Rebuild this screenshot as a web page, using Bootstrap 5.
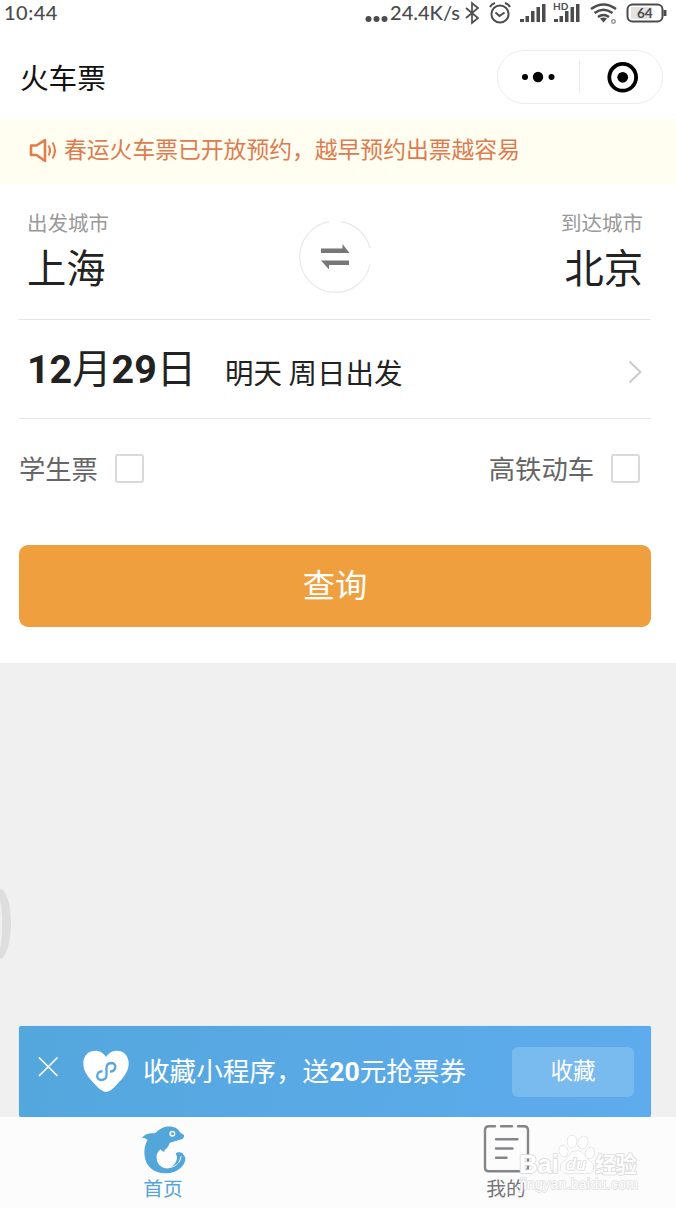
<!DOCTYPE html>
<html lang="zh-CN">
<head>
<meta charset="utf-8">
<meta name="viewport" content="width=device-width, initial-scale=1">
<title>火车票</title>
<link href="https://cdn.jsdelivr.net/npm/bootstrap@5.3.0/dist/css/bootstrap.min.css" rel="stylesheet">
<style>
body{font-family:"Noto Sans CJK SC",sans-serif;background:#f0f0f0;color:#222;line-height:1;overflow:hidden}
svg{display:block;flex:none}
.screen{width:676px;height:1208px}
.num{font-family:Roboto,sans-serif;font-weight:700;line-height:1}
.statusbar{height:27px;font-family:Lato,sans-serif;font-size:20px;font-weight:500;color:#4c4c4c;padding-left:4px}
.statusbar span{padding-bottom:3px}
.statusbar .clock{letter-spacing:.5px}
.statusbar .rate{margin-right:1px}
.header{height:92px;padding:9px 13px 0 20px;font-size:28.6px;color:#111}
.capsule{width:166px;height:54px;border:1px solid #ededed;margin-top:-1px}
.notice{height:65px;background:#fffef1;color:#dc7c50;font-size:22.8px;padding:0 0 4px 29px}
.panel{height:479px;padding:0 25px 0 19px}
.cities{height:136px;padding:28px 8px 0 8px;border-bottom:1px solid #e6e6e6}
.city-label{font-size:20.5px;line-height:20px;color:#999}
.city-name{font-size:39.3px;line-height:40px;margin-top:14px}
.swap{margin-top:8px}
.date-row{height:99px;border-bottom:1px solid #e6e6e6;padding:0 8px 0 8px}
.date{font-size:39.4px;line-height:40px;margin-top:-2px;width:198px}
.weekday{font-size:28.5px;line-height:30px;margin-top:5px}
.arrow{margin-top:5px}
.options{height:98px;font-size:26.3px;color:#666;padding-right:11px}
.options .form-check-input{width:29px;height:29px;margin:0 0 0 17px;border:2px solid #d9d9d9;border-radius:3px}
.options label{margin-top:1px}
.search{height:82px;margin-top:28px;background:#f09f3e!important;color:#fff!important;border:0;border-radius:9px;font-size:32.3px;line-height:32px;padding:0 0 7px}
.promo{height:91px;margin:0 25px 0 19px;padding:0 17px 0 19px;color:#fff;background:linear-gradient(100deg,#54a7dd,#5eabed);border-radius:2px;box-shadow:0 0 1px #78c5dc}
.promo-art{margin-top:-2px}
.promo-text{font-size:26.6px;padding-bottom:2px;line-height:30px}
.collect{width:122px;height:50px;font-size:22.6px;line-height:24px;border:0;border-radius:6px;background:#79bbee!important;color:#fff!important;padding:0 0 3px}
.tabs{height:91px;background:#fcfcfc;font-size:19.8px;line-height:20px}
.tabs span{margin-top:3px}
.tab-icon{margin-top:7px}
.tab-home{flex:0 0 326px;color:#55a5db}
.tab-mine{flex:0 0 360px;color:#77777b}
.watermark{left:515px;top:1130px}
.edge{left:0;top:888px}
</style>
</head>
<body>
<div class="screen d-flex flex-column position-relative bg-transparent">
  <div class="statusbar bg-white d-flex align-items-center">
    <span class="clock">10:44</span>
    <svg class="ms-auto" width="25" height="27" viewBox="0 0 25 27" fill="#4c4c4c"><circle cx="3.500" cy="19" r="3"/><circle cx="11.500" cy="19" r="3"/><circle cx="19.500" cy="19" r="3"/></svg>
    <span class="rate">24.4K/s</span>
    <svg width="215" height="27" viewBox="461 0 215 27" fill="none" stroke="#4c4c4c" stroke-width="2">
      <path d="M466 8l12 10-6 5V3l6 5-12 10" stroke-width="1.7"/>
      <circle cx="500" cy="14" r="8.6"/><path d="M495.5 12.5l4 3.500 5-3.500M490 7q1.500-3 5-4M510 7q-1.500-3-5-4"/>
      <g fill="#4c4c4c" stroke="none"><path d="M520 22v-3h4v3zM525.500 22v-6h3.500v6zM531 22V11h3.500v11zM536.500 22V7h3.500v15zM542 22V4h3.500v18z"/><path d="M554 22v-3h4v3zM559.500 22v-6h3.500v6zM565 22V11h3.500v11zM570.500 22V7h3.500v15zM576 22V4h3.500v18z"/></g>
      <text x="553" y="9.500" font-size="10" font-weight="700" font-family="Lato,sans-serif" fill="#4c4c4c" stroke="none">HD</text>
      <path d="M591 9q12.500-9 25 0M594.500 13q9-6.500 18 0M598 17q5.500-4 11 0" stroke-width="2.600"/><path d="M600 18.500q3.500-2 7 0l-3.500 4z" fill="#4c4c4c" stroke="none"/><circle cx="613.500" cy="21.500" r="1.800" stroke="#888" stroke-width="1.300"/>
      <rect x="627.500" y="4.500" width="35" height="17" rx="5"/><path d="M631 7h21v12h-21z" fill="#e3e3e3" stroke="none"/><path d="M665 10v6" stroke-width="3"/>
      <text x="637" y="18" font-size="13.500" font-weight="700" font-family="Lato,sans-serif" fill="#4c4c4c" stroke="none">64</text>
    </svg>
  </div>
  <header class="header bg-white d-flex align-items-center justify-content-between">
    <span>火车票</span>
    <div class="capsule rounded-pill d-flex align-items-center">
      <svg width="164" height="52" viewBox="498 51 164 52"><g><circle cx="525" cy="77" r="3"/><circle cx="538" cy="77" r="5.200"/><circle cx="551.500" cy="77" r="3"/></g><path d="M579.500 61v32" stroke="#eaeaea"/><circle cx="622.700" cy="77.300" r="13.400" fill="none" stroke="#000" stroke-width="3.800"/><circle cx="622.700" cy="77.300" r="5.400"/></svg>
    </div>
  </header>
  <div class="notice d-flex align-items-center">
    <svg width="35" height="26" viewBox="29 136 35 26" fill="none" stroke="#e17c4c" stroke-width="2.600" stroke-linejoin="round"><path d="M31 144.500h5.500l8.500-5.500v21l-8.500-6H31z"/><path d="M48.500 144.500q3 5 0 10M52.500 141.500q5 8 0 16" stroke-width="2"/></svg>
    <span>春运火车票已开放预约，越早预约出票越容易</span>
  </div>
  <main class="panel bg-white">
    <div class="cities d-flex justify-content-between align-items-start">
      <div><div class="city-label">出发城市</div><div class="city-name">上海</div></div>
      <svg class="swap" width="74" height="74" viewBox="299 220 74 74"><path d="M330 221.700A35.600 35.600 0 1 0 371.200 264M342 221.700A35.600 35.600 0 0 1 371 248" fill="none" stroke="#e8e8e8" stroke-width="1.200"/><path d="M322 248.500h21.500v-4.500l7 9H322zM350 265h-20v4.500l-8-9h28z" fill="#777"/></svg>
      <div class="text-end"><div class="city-label">到达城市</div><div class="city-name">北京</div></div>
    </div>
    <div class="date-row d-flex align-items-center">
      <div class="date"><span class="num">12</span>月<span class="num">29</span>日</div>
      <div class="weekday">明天 周日出发</div>
      <svg class="arrow ms-auto" width="16" height="24" viewBox="627 360 16 24" fill="none" stroke="#c8c8c8" stroke-width="1.800"><path d="M629.500 361.500l11 10.500-11 10.500"/></svg>
    </div>
    <div class="options d-flex align-items-center justify-content-between">
      <div class="d-flex align-items-center"><label for="student">学生票</label><input class="form-check-input" type="checkbox" id="student"></div>
      <div class="d-flex align-items-center"><label for="rapid">高铁动车</label><input class="form-check-input" type="checkbox" id="rapid"></div>
    </div>
    <button class="search btn w-100">查询</button>
  </main>
  <div class="promo d-flex align-items-center mt-auto">
    <svg class="promo-art" width="105" height="50" viewBox="38 1046 105 50" fill="none" stroke="#fff"><path d="M39 1057.500l18.500 18.500M57.500 1057.500L39 1076" stroke-width="1.700"/><path d="M106 1092q-4 0-10-6.500C91 1080 83.300 1073 83.300 1063.500c0-14 16.500-17 22.700-6.500 6.500-10.500 22.700-7.500 22.700 6.500 0 9.500-7.700 16.500-12.700 22q-6 6.500-10 6.500z" fill="#fff" stroke="none"/><path d="M102.500 1071.500c-6-.5-7.500 8-1.500 8.500 3.500 0 5.500-2 5.500-5v-7c0-3 2-5 5-5 6 .5 4.500 8.500-1.500 8.500" stroke="#5aa6dc" stroke-width="2.300"/></svg>
    <span class="promo-text">收藏小程序，送<span class="num">20</span>元抢票券</span>
    <button class="collect btn ms-auto">收藏</button>
  </div>
  <nav class="tabs d-flex overflow-hidden">
    <div class="tab-home d-flex flex-column align-items-center">
      <svg class="tab-icon" width="47" height="51" viewBox="30 25 141 153" fill="#52a6da"><path d="M162 58C155 54 150 50 147 45 140 33 112 28 95 38 86 43 80 48 75 53 60 51 45 54 36 66 44 67 50 69 53 74 44 86 42 105 44 122 48 155 75 174 107 173 140 174 167 150 166 128 165 120 158 117 158 113 150 108 140 110 137 114 141 120 142 124 140 132 135 150 118 160 103 157 85 152 78 135 80 118 82 110 88 105 92 101 94 105 99 108 104 109 103 105 103 103 106 101 116 95 116 86 120 81 132 76 145 74 150 72 158 72 163 66 162 58Z"/><path d="M153 122C151 143 134 155 110 157" fill="none" stroke="#fff" stroke-width="3"/><circle cx="127" cy="54" r="7" fill="#79bfe5" stroke="#fff" stroke-width="4"/><circle cx="129" cy="54" r="3"/></svg>
      <span>首页</span>
    </div>
    <div class="tab-mine d-flex flex-column align-items-center">
      <svg class="tab-icon" width="47" height="51" viewBox="483 1125 47 51" fill="none" stroke="#858589" stroke-width="2.400" stroke-linecap="round"><path d="M495 1127.300h-6q-4 0-4 4v37q0 4 4 4h35q4 0 4-4v-37q0-4-4-4h-6M501 1127.300h11"/><path d="M496 1140.300h21.500M496 1149.500h16.500M496 1158.800h10.500"/></svg>
      <span>我的</span>
    </div>
  </nav>
  <svg class="watermark position-absolute" width="130" height="65" viewBox="515 1130 130 65" fill="#fff" fill-opacity=".8" stroke="#d8d8d8" stroke-width="1.600" paint-order="stroke" stroke-linejoin="round">
    <text x="519" y="1172.500" font-family="Liberation Sans,sans-serif" font-size="26" font-weight="700" textLength="40" lengthAdjust="spacingAndGlyphs" fill-opacity="1">Bai</text>
    <g stroke-width="1"><ellipse cx="563.500" cy="1151" rx="4.300" ry="5.700" transform="rotate(-15 563.500 1151)"/><ellipse cx="572" cy="1141.500" rx="4.700" ry="6.300"/><ellipse cx="583" cy="1142.500" rx="4.700" ry="6.300" transform="rotate(15 583 1142.500)"/><ellipse cx="590" cy="1153" rx="4.500" ry="5.700" transform="rotate(20 590 1153)"/>
    <path d="M577 1151c-7 0-8 6-13 10-6 5-4 12 3 12.500 5 .5 6-.5 10-.5s6 1 11 .5c6-.5 8-7 2-12.500-5-4-6-10-13-10z"/></g>
    <text x="566" y="1169.500" font-family="Liberation Sans,sans-serif" font-size="16.500" font-weight="700" font-style="italic" textLength="20" fill-opacity="1">du</text>
    <text x="595" y="1171.500" font-family="Noto Sans CJK SC,sans-serif" font-size="21.500" font-weight="700" textLength="42" fill-opacity="1">经验</text>
    <text x="520" y="1189" font-family="Liberation Sans,sans-serif" font-size="14" textLength="118" stroke="#dedede" stroke-width="1.500" fill-opacity="1">jingyan.baidu.com</text>
  </svg>
  <svg class="edge position-absolute" width="12" height="72" viewBox="0 888 12 72"><path d="M0 890h2.500C13.500 902 13 946 2 958H0v-7c3.500-12 3.500-42 0-53z" fill="#dedede" stroke="#d6d6d6" stroke-width=".6"/></svg>
</div>
<script src="https://cdn.jsdelivr.net/npm/bootstrap@5.3.0/dist/js/bootstrap.bundle.min.js"></script>
</body>
</html>
